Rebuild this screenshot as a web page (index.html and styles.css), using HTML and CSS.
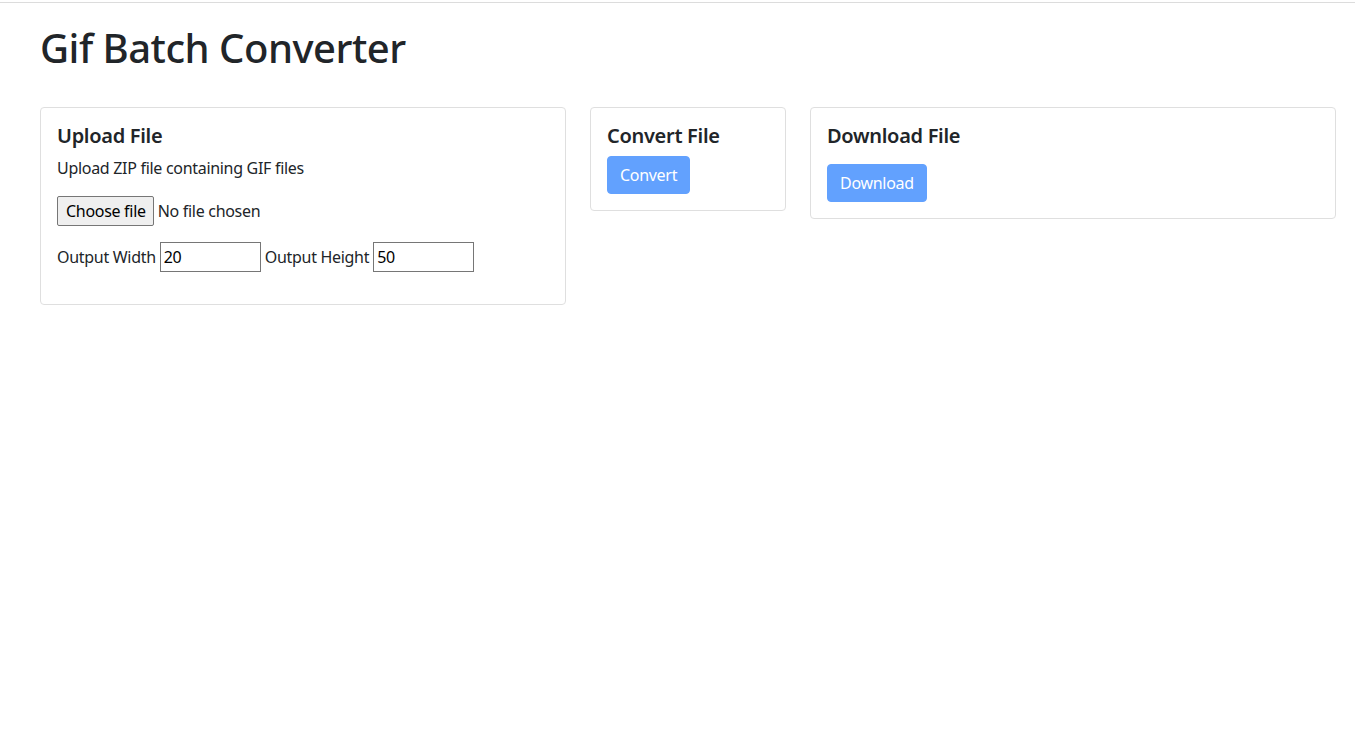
FILE: index.html
```html
<!DOCTYPE html>
<html lang="en">
<head>
  <meta charset="UTF-8">
  <meta name="viewport" content="width=device-width, initial-scale=1.0">
  <title>Gif Batch Converter</title>
  <link rel="stylesheet" href="styles.css">
</head>
<body>
  <div class="topline"></div>
  <div class="page">
    <h1 class="title">Gif Batch Converter</h1>

    <div class="cards">
      <div class="card upload-card">
        <h5 class="card-title">Upload File</h5>
        <p class="card-text">Upload ZIP file containing GIF files</p>
        <form class="upload-form">
          <label class="file-row">
            <input type="file" name="zip" accept=".zip" class="file-hidden">
            <span class="file-btn">Choose file</span>
            <span class="file-name">No file chosen</span>
          </label>
          <div class="size-row">
            <label for="width">Output Width</label>
            <input type="text" id="width" value="20">
            <label for="height">Output Height</label>
            <input type="text" id="height" value="50">
          </div>
        </form>
      </div>

      <div class="card convert-card">
        <h5 class="card-title">Convert File</h5>
        <button class="btn" disabled>Convert</button>
      </div>

      <div class="card download-card">
        <h5 class="card-title spaced">Download File</h5>
        <button class="btn" disabled>Download</button>
      </div>
    </div>
  </div>
</body>
</html>
```

FILE: styles.css
```css
* {
  box-sizing: border-box;
}

body {
  margin: 0;
  font-family: 'Noto Sans', sans-serif;
  font-size: 16px;
  line-height: 1.5;
  letter-spacing: -0.3px;
  color: #212529;
  background: #fff;
}

.topline {
  height: 3px;
  border-bottom: 1px solid #dcdcdc;
}

.page {
  padding: 0 19px 0 40px;
}

.title {
  margin: 21px 0 35px;
  font-size: 40px;
  font-weight: 500;
  line-height: 1.2;
  letter-spacing: -0.5px;
}

.cards {
  display: flex;
  align-items: flex-start;
  gap: 24px;
}

.card {
  flex: none;
  border: 1px solid #dfdfdf;
  border-radius: 4px;
  padding: 16px;
}

.upload-card,
.download-card {
  width: 526px;
}

.convert-card {
  width: 196px;
}

.card-title {
  margin: 0 0 8px;
  font-size: 20px;
  font-weight: 600;
  line-height: 1.2;
}

.card-title.spaced {
  margin-bottom: 16px;
}

.card-text {
  margin: 0 0 16px;
}

/* file picker drawn by hand so the label text stays fixed */
.file-row {
  display: flex;
  align-items: center;
  gap: 4px;
  height: 30px;
  margin-bottom: 16px;
  color: #000;
}

.file-hidden {
  display: none;
}

.file-btn {
  display: inline-flex;
  align-items: center;
  height: 30px;
  padding: 0 7px 0 8px;
  border: 1px solid #767676;
  border-radius: 2px;
  background: #efefef;
  color: #000;
}

.file-name {
  color: #212529;
}

.size-row {
  margin-bottom: 16px;
  display: flex;
  align-items: center;
  gap: 4px;
}

.size-row input {
  width: 101px;
  height: 30px;
  padding: 0 3px;
  font-family: inherit;
  font-size: 16px;
  letter-spacing: -0.3px;
  border: 1px solid #767676;
  border-radius: 0;
  color: #000;
}

.btn {
  font-family: inherit;
  font-size: 16px;
  line-height: 1.5;
  letter-spacing: -0.3px;
  padding: 6px 12px;
  color: #fff;
  background: #62a1fe;
  border: 1px solid #62a1fe;
  border-radius: 4px;
}
```
